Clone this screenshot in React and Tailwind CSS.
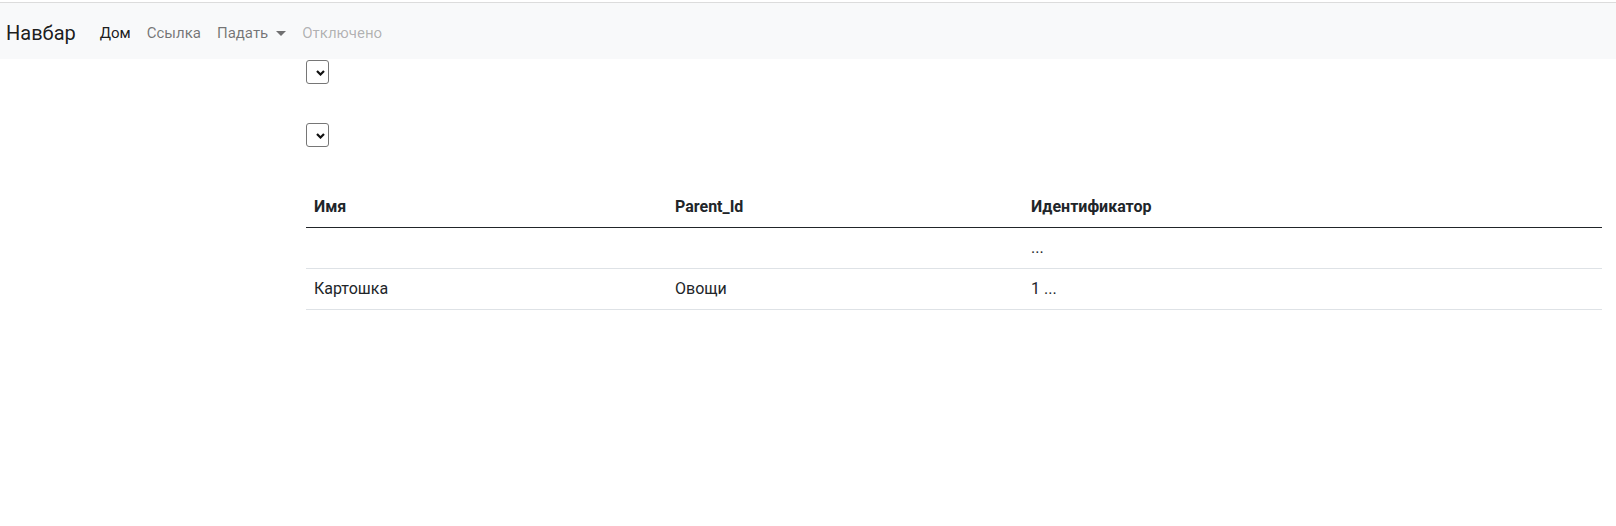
export default function App() {
  const SelectBox = () => (
    <div className="relative w-[23px] h-[24px] border border-[#767676] rounded-[3px] bg-white">
      <svg className="absolute left-[9px] top-[9px]" width="9" height="6" viewBox="0 0 9 6">
        <path d="M1 1 L4.5 4.5 L8 1" fill="none" stroke="#111" strokeWidth="2.2" />
      </svg>
    </div>
  );
  return (
    <div className="w-full min-h-[526px] bg-white text-[#212529] font-['Roboto','Open_Sans',sans-serif]">
      <div className="h-[2px] bg-white" />
      <div className="border-t border-[#dcdcdc]" />
      <nav className="h-[56px] bg-[#f8f9fa] flex items-center pl-[6px] pt-[4px]">
        <span className="text-[20px] leading-[30px] mr-4 text-black/90">Навбар</span>
        <ul className="flex items-center text-[15px] leading-[24px]">
          <li className="px-2 text-black/90">Дом</li>
          <li className="px-2 text-black/55">Ссылка</li>
          <li className="px-2 text-black/55 flex items-center">
            Падать
            <span className="ml-[8px] w-0 h-0 border-t-[5px] border-t-black/55 border-x-[5px] border-x-transparent" />
          </li>
          <li className="px-2 text-black/30">Отключено</li>
        </ul>
      </nav>
      <div className="pl-[306px] pr-[14px]">
        <div className="pt-[1px]">
          <SelectBox />
        </div>
        <div className="mt-[39px]">
          <SelectBox />
        </div>
        <table className="mt-[40px] w-full table-fixed border-collapse text-[16px] leading-[24px]">
          <thead>
            <tr className="border-b border-[#212529]">
              <th className="w-[361px] text-left font-bold px-2 py-2">Имя</th>
              <th className="w-[356px] text-left font-bold px-2 py-2">Parent_Id</th>
              <th className="text-left font-bold px-2 py-2">Идентификатор</th>
            </tr>
          </thead>
          <tbody>
            <tr className="border-b border-[#dee2e6]">
              <td className="px-2 py-2"></td>
              <td className="px-2 py-2"></td>
              <td className="px-2 py-2">...</td>
            </tr>
            <tr className="border-b border-[#dee2e6]">
              <td className="px-2 py-2">Картошка</td>
              <td className="px-2 py-2">Овощи</td>
              <td className="px-2 py-2">1 ...</td>
            </tr>
          </tbody>
        </table>
      </div>
    </div>
  );
}
